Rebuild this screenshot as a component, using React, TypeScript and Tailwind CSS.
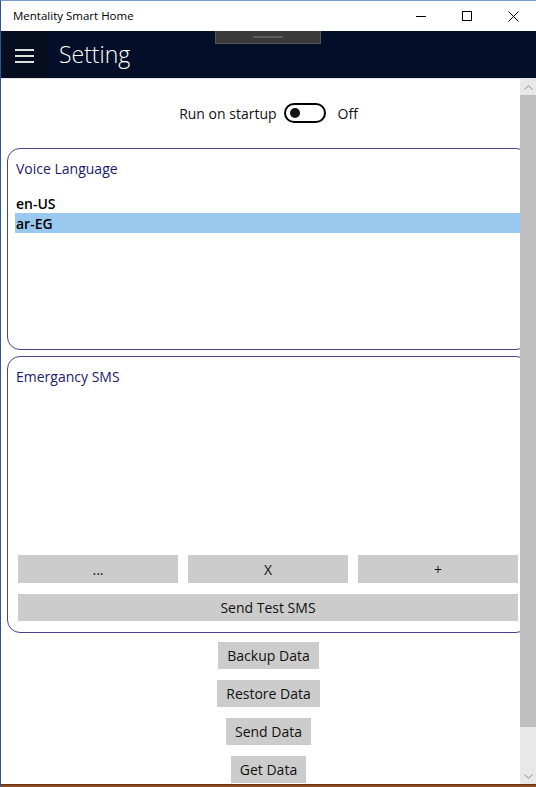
import React from "react";

const F = "font-['Open_Sans',sans-serif]";

export default function App() {
  return (
    <div className={`w-[536px] h-[787px] relative overflow-hidden bg-white flex flex-col ${F} border-l border-[#2b5797] border-t border-t-[#7a9cc9]`}>
      {/* Title bar */}
      <div className="h-[30px] flex items-center shrink-0">
        <div className="pl-[12px] text-[11.5px] text-black leading-none">Mentality Smart Home</div>
        <div className="ml-auto flex h-full">
          <div className="w-[46px] h-full flex items-center justify-center">
            <div className="w-[10px] h-px bg-black" />
          </div>
          <div className="w-[46px] h-full flex items-center justify-center">
            <div className="w-[10px] h-[10px] border border-black" />
          </div>
          <div className="w-[46px] h-full flex items-center justify-center">
            <svg width="11" height="11" viewBox="0 0 11 11">
              <path d="M0.5 0.5 L10.5 10.5 M10.5 0.5 L0.5 10.5" stroke="#000" strokeWidth="1" />
            </svg>
          </div>
        </div>
      </div>

      {/* Header */}
      <div className="h-[47px] bg-[#030f29] flex items-center shrink-0 relative">
        <div className="w-[47px] h-full bg-[#050d1f] flex flex-col items-center justify-center gap-[4px] pt-[2px]">
          <div className="w-[19px] h-[2px] bg-[#e0e0e0]" />
          <div className="w-[19px] h-[2px] bg-[#e0e0e0]" />
          <div className="w-[19px] h-[2px] bg-[#e0e0e0]" />
        </div>
        <div className="ml-[11px] text-[23px] text-white font-light leading-none">Setting</div>
        <div className="absolute left-[214px] top-0 w-[106px] h-[13px] bg-[#3a3a3a] border border-[#555] border-t-0 flex justify-center">
          <div className="mt-[5px] w-[30px] h-[2px] bg-[#5c5c5c]" />
        </div>
      </div>

      {/* Content */}
      <div className="flex-1 relative overflow-hidden border-t border-[#e4e4e4]">
        <div className="flex flex-col items-center pt-[24px]">
          <div className="h-[20px] flex items-center text-[14px] text-[#111]">
            <span>Run on startup</span>
            <div className="ml-[7px] w-[42px] h-[20px] rounded-full border-2 border-black flex items-center pl-[4px]">
              <div className="w-[10px] h-[10px] rounded-full bg-[#111]" />
            </div>
            <span className="ml-[12px]">Off</span>
          </div>

          {/* Voice Language card */}
          <div className="self-stretch ml-[6px] mr-[7px] mt-[25px] h-[202px] rounded-[13px] border border-[#45458a] pt-[9px]">
            <div className="pl-[8px] h-[20px] flex items-center text-[14px] text-[#1b1b6b]">Voice Language</div>
            <div className="mt-[15px] ml-[7px]">
              <div className="h-[20px] flex items-center pl-[1px] text-[14px] font-semibold text-black">en-US</div>
              <div className="h-[20px] flex items-center pl-[1px] text-[14px] font-semibold text-black bg-[#99c9ef]">ar-EG</div>
            </div>
          </div>

          {/* Emergancy SMS card */}
          <div className="self-stretch ml-[6px] mr-[7px] mt-[6px] h-[277px] rounded-[13px] border border-[#45458a] pt-[9px] flex flex-col">
            <div className="pl-[8px] h-[20px] flex items-center text-[14px] text-[#1b1b6b]">Emergancy SMS</div>
            <div className="mt-auto px-[10px] pb-[11px] flex flex-col gap-[11px]">
              <div className="grid grid-cols-3 gap-[10px]">
                <div className="h-[28px] bg-[#cccccc] flex items-center justify-center text-[14px] text-[#111]">...</div>
                <div className="h-[28px] bg-[#cccccc] flex items-center justify-center text-[14px] text-[#111]">X</div>
                <div className="h-[28px] bg-[#cccccc] flex items-center justify-center text-[14px] text-[#111]">+</div>
              </div>
              <div className="h-[27px] bg-[#cccccc] flex items-center justify-center text-[14px] text-[#111]">Send Test SMS</div>
            </div>
          </div>

          <div className="mt-[9px] flex flex-col items-center gap-[11px]">
            <div className="h-[27px] px-[9px] bg-[#cccccc] flex items-center text-[14px] text-[#111]">Backup Data</div>
            <div className="h-[27px] px-[9px] bg-[#cccccc] flex items-center text-[14px] text-[#111]">Restore Data</div>
            <div className="h-[27px] px-[9px] bg-[#cccccc] flex items-center text-[14px] text-[#111]">Send Data</div>
            <div className="h-[27px] px-[9px] bg-[#cccccc] flex items-center text-[14px] text-[#111]">Get Data</div>
          </div>
        </div>

        {/* Scrollbar overlay */}
        <div className="absolute right-0 top-0 bottom-0 w-[16px] bg-[#e8e8e8] flex flex-col">
          <div className="h-[16px] flex items-center justify-center">
            <svg width="9" height="5" viewBox="0 0 9 5">
              <path d="M0.5 4.5 L4.5 0.8 L8.5 4.5" stroke="#8a8a8a" strokeWidth="1" fill="none" />
            </svg>
          </div>
          <div className="h-[632px] bg-[#bfbfbf]" />
          <div className="flex-1" />
          <div className="h-[16px] flex items-center justify-center">
            <svg width="9" height="5" viewBox="0 0 9 5">
              <path d="M0.5 0.5 L4.5 4.2 L8.5 0.5" stroke="#8a8a8a" strokeWidth="1" fill="none" />
            </svg>
          </div>
        </div>
      </div>

      {/* Bottom bar */}
      <div className="h-[3px] bg-[#8b4a20] border-t border-[#6b3515] shrink-0" />
    </div>
  );
}
